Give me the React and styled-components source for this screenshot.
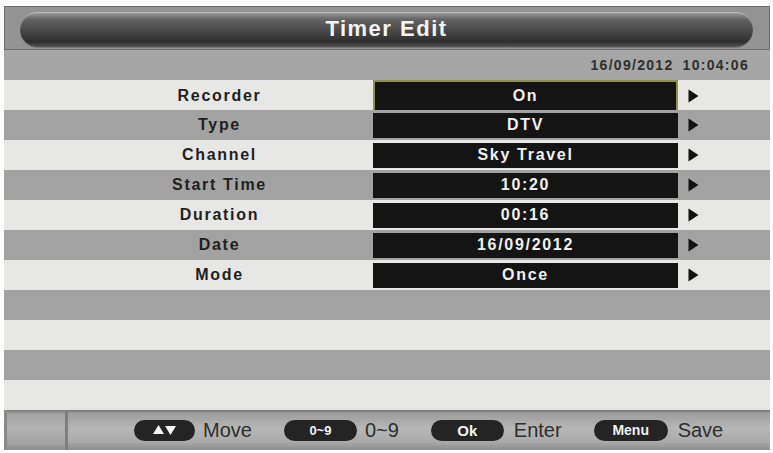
import React from 'react';
import styled, { createGlobalStyle } from 'styled-components';

const GlobalStyle = createGlobalStyle`
  body {
    margin: 0;
    background: #ffffff;
    font-family: "Liberation Sans", Arial, sans-serif;
  }
`

const Screen = styled.div`
  width: 766px;
  margin: 6px 0 0 4px;
  display: flex;
  flex-direction: column;
`

const Header = styled.div`
  height: 44px;
  box-sizing: border-box;
  background: #939393;
  border: 1px solid #707070;
  padding: 5px 16px 3px 15px;
  display: flex;
  align-items: center;
`

const TitlePill = styled.div`
  flex: 1;
  height: 35px;
  border-radius: 18px;
  background: linear-gradient(#a0a0a0 0%, #626262 22%, #474747 55%, #2e2e2e 85%, #555555 100%);
  box-shadow: inset 0 1px 1px rgba(255, 255, 255, 0.35), 0 1px 0 #7a7a7a;
  color: #f4f4f4;
  font-size: 22px;
  font-weight: bold;
  letter-spacing: 1.5px;
  display: flex;
  align-items: center;
  justify-content: center;
`

const DateBar = styled.div`
  height: 30px;
  background: #a6a6a6;
  display: flex;
  align-items: center;
  justify-content: flex-end;
  gap: 9px;
  padding-right: 21px;
  color: #2f2f2f;
  font-size: 14px;
  font-weight: bold;
  letter-spacing: 1.3px;
`

const Row = styled.div`
  height: 30px;
  background: ${p => (p.$dark ? '#a2a2a2' : '#e7e7e5')};
  display: grid;
  grid-template-columns: 369px 305px auto;
  align-items: center;
`

const Label = styled.div`
  padding-left: 62px;
  text-align: center;
  color: #1f1f1f;
  font-size: 16px;
  font-weight: bold;
  letter-spacing: 1.7px;
`

const ValueBox = styled.div`
  height: ${p => (p.$focused ? '32px' : '25px')};
  box-sizing: border-box;
  background: #141414;
  border: ${p => (p.$focused ? '2px solid #8f8f4c' : 'none')};
  color: #f0f0f0;
  font-size: 16px;
  font-weight: bold;
  letter-spacing: 1.7px;
  display: flex;
  align-items: center;
  justify-content: center;
`

const Arrow = styled.svg`
  margin-left: 10px;
  display: block;
`

const Footer = styled.div`
  height: 40px;
  display: flex;
  background: linear-gradient(#707070 0px, #9c9c9c 3px, #b6b6b6 45%, #aaaaaa 80%, #8c8c8c 100%);
`

const FooterCorner = styled.div`
  width: 58px;
  border-left: 3px solid #8a8a8a;
  border-right: 3px solid #7e7e7e;
  background: linear-gradient(#7a7a7a 0px, #a4a4a4 4px, #b2b2b2 45%, #a2a2a2 85%, #8c8c8c 100%);
`

const FooterKeys = styled.div`
  flex: 1;
  display: flex;
  align-items: center;
  gap: 32px;
  padding-left: 66px;
`

const KeyItem = styled.div`
  display: flex;
  align-items: center;
  gap: ${p => p.$gap || 8}px;
`

const KeyPill = styled.div`
  width: ${p => p.$w}px;
  height: 21px;
  border-radius: 11px;
  background: #242424;
  color: #f2f2f2;
  font-size: ${p => p.$size || 14}px;
  font-weight: bold;
  display: flex;
  align-items: center;
  justify-content: center;
  gap: 1px;
`

const KeyText = styled.span`
  color: #2e2e2e;
  font-size: 20px;
`

const rows = [
  ['Recorder', 'On'],
  ['Type', 'DTV'],
  ['Channel', 'Sky Travel'],
  ['Start Time', '10:20'],
  ['Duration', '00:16'],
  ['Date', '16/09/2012'],
  ['Mode', 'Once'],
]

const RightArrow = () => (
  <Arrow width="11" height="14" viewBox="0 0 11 14">
    <path d="M0.5 0.5 L10.5 7 L0.5 13.5 Z" fill="#111" />
  </Arrow>
)

const Tri = ({ down }) => (
  <svg width="11" height="10" viewBox="0 0 11 10">
    <path d={down ? 'M0 1 L11 1 L5.5 10 Z' : 'M5.5 0 L11 9 L0 9 Z'} fill="#f4f4f4" />
  </svg>
)

export default function App() {
  return (
    <>
      <GlobalStyle />
      <Screen>
        <Header>
          <TitlePill>Timer Edit</TitlePill>
        </Header>
        <DateBar>
          <span>16/09/2012</span>
          <span>10:04:06</span>
        </DateBar>
        {rows.map(([label, value], i) => (
          <Row key={label} $dark={i % 2 === 1}>
            <Label>{label}</Label>
            <ValueBox $focused={i === 0}>{value}</ValueBox>
            <RightArrow />
          </Row>
        ))}
        {[7, 8, 9, 10].map(i => (
          <Row key={i} $dark={i % 2 === 1} />
        ))}
        <Footer>
          <FooterCorner />
          <FooterKeys>
            <KeyItem>
              <KeyPill $w={61}><Tri /><Tri down /></KeyPill>
              <KeyText>Move</KeyText>
            </KeyItem>
            <KeyItem>
              <KeyPill $w={73} $size={13}>0~9</KeyPill>
              <KeyText>0~9</KeyText>
            </KeyItem>
            <KeyItem $gap={10}>
              <KeyPill $w={73} $size={15}>Ok</KeyPill>
              <KeyText>Enter</KeyText>
            </KeyItem>
            <KeyItem $gap={10}>
              <KeyPill $w={74} $size={14}>Menu</KeyPill>
              <KeyText>Save</KeyText>
            </KeyItem>
          </FooterKeys>
        </Footer>
      </Screen>
    </>
  );
}
